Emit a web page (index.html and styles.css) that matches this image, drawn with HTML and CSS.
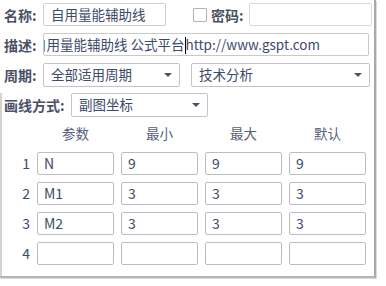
FILE: index.html
```html
<!DOCTYPE html>
<html>
<head>
<meta charset="utf-8">
<link rel="stylesheet" href="styles.css">
</head>
<body>
<div class="panel">
  <div class="row r1">
    <span class="lbl">名称:</span>
    <div class="inp w-name">自用量能辅助线</div>
    <span class="chk"></span>
    <span class="lbl lbl-pw">密码:</span>
    <div class="inp w-pw"></div>
  </div>
  <div class="row r2">
    <span class="lbl">描述:</span>
    <div class="inp w-desc"><span class="scroll">自用量能辅助线 公式平台<span class="caret"></span>http://www.gspt.com</span></div>
  </div>
  <div class="row r3">
    <span class="lbl">周期:</span>
    <div class="inp sel w-sel1">全部适用周期<span class="arrow"></span></div>
    <div class="inp sel w-sel2">技术分析<span class="arrow"></span></div>
  </div>
  <div class="lower">
    <div class="row r4">
      <span class="lbl lbl-draw">画线方式:</span>
      <div class="inp sel w-sel3">副图坐标<span class="arrow"></span></div>
    </div>
    <div class="grid">
      <span></span><span class="hd">参数</span><span class="hd">最小</span><span class="hd">最大</span><span class="hd">默认</span>
      <span class="num">1</span><div class="cell">N</div><div class="cell">9</div><div class="cell">9</div><div class="cell">9</div>
      <span class="num">2</span><div class="cell">M1</div><div class="cell">3</div><div class="cell">3</div><div class="cell">3</div>
      <span class="num">3</span><div class="cell">M2</div><div class="cell">3</div><div class="cell">3</div><div class="cell">3</div>
      <span class="num">4</span><div class="cell"></div><div class="cell"></div><div class="cell"></div><div class="cell"></div>
    </div>
  </div>
</div>
</body>
</html>
```
FILE: styles.css
```css
html, body { margin: 0; padding: 0; background: #ffffff; }
body {
  font-family: "Noto Sans CJK SC", "Noto Sans", sans-serif;
  font-size: 13.5px;
  color: #3d4a66;
  width: 386px;
  height: 286px;
  overflow: hidden;
}
.panel {
  width: 376px;
  height: 278px;
  border-right: 2px solid #a9a9a9;
  border-bottom: 2px solid #b5b5b5;
  box-shadow: 1px 1px 0 #dcdcdc;
  box-sizing: border-box;
  padding-top: 3px;
}
.row { display: flex; align-items: center; }
.lbl {
  font-weight: bold;
  color: #4a5166;
  width: 39px;
  padding-left: 4px;
  font-size: 14px;
  line-height: 16px;
}
.inp {
  box-sizing: border-box;
  border: 1px solid #cfcfd3;
  border-radius: 2px;
  background: #fff;
  height: 23px;
  padding-left: 7px;
  line-height: 20px;
  white-space: nowrap;
  overflow: hidden;
  color: #3d4a6a;
  position: relative;
}
.r1 { height: 23px; }
.w-name { width: 123px; }
.chk {
  width: 12px; height: 12px;
  border: 1px solid #b0b0b6;
  border-radius: 1px;
  margin-left: 27px;
}
.lbl-pw { width: 38px; padding-left: 4px; }
.w-pw { width: 123px; border-color: #dadade; }
.r2 { margin-top: 7px; height: 23px; }
.w-desc { width: 326px; padding-left: 0; border-color: #c9c9cd; }
.scroll { display: inline-block; margin-left: -11px; }
.caret {
  display: inline-block;
  width: 1px; height: 17px;
  background: #000;
  vertical-align: -4px;
}
.r3 { margin-top: 7px; height: 24px; }
.sel { height: 24px; line-height: 21px; border-color: #c4c4c8; }
.w-sel1 { width: 137px; }
.w-sel2 { width: 179px; margin-left: 11px; }
.arrow {
  position: absolute;
  right: 7px; top: 9px;
  width: 0; height: 0;
  border-left: 4px solid transparent;
  border-right: 4px solid transparent;
  border-top: 4px solid #4b5468;
}
.lower {
  margin-top: 6px;
  border-left: 2px solid #d3d3d3;
  height: 183px;
}
.r4 { height: 24px; }
.lbl-draw { width: 67px; padding-left: 2px; }
.w-sel3 { width: 137px; }
.grid {
  display: grid;
  grid-template-columns: 27px 77px 77px 77px 77px;
  column-gap: 7px;
  grid-template-rows: 28px 23px 23px 23px 23px;
  row-gap: 7px;
  margin-top: 0;
  padding-left: 1px;
}
.hd {
  text-align: center;
  align-self: end;
  color: #556079;
  line-height: 16px;
  padding-bottom: 4px;
}
.num {
  text-align: right;
  font-size: 14px;
  color: #3d4a6a;
  line-height: 23px;
}
.cell {
  box-sizing: border-box;
  border: 1px solid #bcbcc2;
  border-radius: 2px;
  height: 23px;
  padding-left: 6px;
  line-height: 21px;
  font-size: 14px;
  color: #3d4a6a;
}
```
